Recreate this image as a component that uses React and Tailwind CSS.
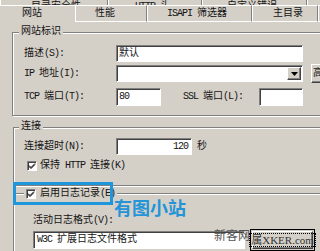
import React from "react";

const raised =
  "bg-[#d4d0c8] border border-t-white border-l-white border-r-[#404040] border-b-[#404040] shadow-[inset_-1px_-1px_0_#808080]";
const sunken =
  "bg-white border border-t-[#808080] border-l-[#808080] border-r-white border-b-white shadow-[inset_1px_1px_0_#404040]";
const etched =
  "border border-[#808080] shadow-[1px_1px_0_#fff,inset_1px_1px_0_#fff]";

function T({ children }) {
  const parts = String(children).split(/([\x20-\x7e]+)/);
  return (
    <>
      {parts.map((p, i) =>
        /^[\x20-\x7e]+$/.test(p) ? (
          <span key={i} className="tracking-[-1px] whitespace-pre">
            {p}
          </span>
        ) : (
          <span key={i}>{p}</span>
        )
      )}
    </>
  );
}

function Check() {
  return (
    <span className={`${sunken} w-[10px] h-[10px] shrink-0 flex items-center justify-center`}>
      <svg width="8" height="8" viewBox="0 0 8 8">
        <path d="M1 3.5 L3 5.5 L7 1.5 M1 4.5 L3 6.5 L7 2.5" stroke="#000" strokeWidth="1" fill="none" />
      </svg>
    </span>
  );
}

function BackTab({ w, label }) {
  return (
    <div className={`${w} h-[5px] shrink-0 border-l border-l-white border-r border-r-[#808080] flex items-end overflow-hidden`}>
      <span className="leading-none whitespace-nowrap mb-[-7px]">
        <T>{label}</T>
      </span>
    </div>
  );
}

function FrontTab({ w, label, selected }) {
  return (
    <div
      className={`${w} shrink-0 flex items-center whitespace-nowrap h-[17px] ${
        selected
          ? "border-t border-t-white pb-[1px]"
          : "border-t border-t-white border-l border-l-white border-r border-r-[#808080] border-b border-b-white"
      }`}
    >
      <T>{label}</T>
    </div>
  );
}

export default function App() {
  return (
    <div className="relative w-[320px] h-[251px] overflow-hidden bg-[#d4d0c8] text-[#141414] text-[10px] leading-none font-['Liberation_Mono','Noto_Sans_CJK_SC',monospace]">
      {/* back tab row */}
      <div className="flex h-[5px]">
        <BackTab w="w-[108px] pl-[30px]" label="目录安全性" />
        <BackTab w="w-[94px] pl-[26px]" label="HTTP 头" />
        <BackTab w="w-[105px] pl-[24px]" label="自定义错误" />
        <BackTab w="w-[60px] pl-[20px]" label="服务器扩展" />
      </div>
      {/* front tab row */}
      <div className="flex">
        <FrontTab w="w-[75px] pl-[22px]" label="网站" selected />
        <FrontTab w="w-[72px] pl-[19px]" label="性能" />
        <FrontTab w="w-[105px] pl-[19px]" label="ISAPI 筛选器" />
        <FrontTab w="w-[66px] pl-[20px]" label="主目录" />
        <FrontTab w="w-[40px] pl-[10px]" label="文档" />
      </div>

      {/* group 1 */}
      <div className={`relative ${etched} ml-[12px] mt-[10px] w-[380px] h-[84px] pl-[11px] pt-[12px]`}>
        <span className="absolute -top-[6px] left-[6px] px-[2px] bg-[#d4d0c8] leading-[10px]">网站标识</span>
        <div className="flex items-center h-[17px]">
          <span className="w-[92px] shrink-0">
            <T>描述(S):</T>
          </span>
          <div className={`${sunken} w-[187px] h-[17px] shrink-0 flex items-center pl-[2px]`}>默认</div>
        </div>
        <div className="flex items-center h-[17px] mt-[3px]">
          <span className="w-[92px] shrink-0">
            <T>IP 地址(I):</T>
          </span>
          <div className={`${sunken} w-[187px] h-[17px] shrink-0 flex items-center justify-end pr-[1px]`}>
            <div className={`${raised} w-[14px] h-[13px] flex items-center justify-center`}>
              <svg width="7" height="4" viewBox="0 0 7 4">
                <path d="M0 0 H7 L3.5 4 Z" fill="#000" />
              </svg>
            </div>
          </div>
          <div className={`${raised} ml-[8px] w-[60px] h-[19px] shrink-0 flex items-center pl-[1px] whitespace-nowrap`}>
            <T>高级(D)...</T>
          </div>
        </div>
        <div className="flex items-center h-[18px] mt-[6px]">
          <span className="w-[92px] shrink-0">
            <T>TCP 端口(T):</T>
          </span>
          <div className={`${sunken} w-[45px] h-[18px] shrink-0 flex items-center pl-[2px]`}>
            <T>80</T>
          </div>
          <span className="ml-[22px] w-[76px] shrink-0">
            <T>SSL 端口(L):</T>
          </span>
          <div className={`${sunken} w-[44px] h-[18px] shrink-0`} />
        </div>
      </div>

      {/* group 2 */}
      <div className={`relative ${etched} ml-[13px] mt-[11px] w-[380px] h-[59px] pl-[10px] pt-[10px]`}>
        <span className="absolute -top-[6px] left-[5px] px-[2px] bg-[#d4d0c8] leading-[10px]">连接</span>
        <div className="flex items-center h-[17px]">
          <span className="w-[92px] shrink-0">
            <T>连接超时(N):</T>
          </span>
          <div className={`${sunken} w-[76px] h-[17px] shrink-0 flex items-center justify-end pr-[3px]`}>
            <T>120</T>
          </div>
          <span className="ml-[5px]">秒</span>
        </div>
        <div className="flex items-center h-[16px] mt-[3px] pl-[3px] gap-[3px]">
          <Check />
          <span>
            <T>保持 HTTP 连接(K)</T>
          </span>
        </div>
      </div>

      {/* group 3 */}
      <div className={`relative ${etched} ml-[13px] mt-[7px] w-[380px] h-[80px] pl-[19px] pt-[21px]`}>
        <div className="absolute -top-[5px] left-[10px] pl-[2px] pr-[2px] bg-[#d4d0c8] flex items-center gap-[4px]">
          <Check />
          <span className="leading-[10px]">
            <T>启用日志记录(E)</T>
          </span>
        </div>
        <div className="h-[12px] flex items-center">
          <T>活动日志格式(V):</T>
        </div>
        <div className="flex items-center mt-[2px]">
          <div className={`${sunken} w-[212px] h-[18px] shrink-0 flex items-center pl-[3px]`}>
            <T>W3C 扩展日志文件格式</T>
          </div>
          <div className="ml-[5px] w-[65px] h-[22px] shrink-0 border border-black p-[1px]">
            <div className={`${raised} w-full h-full flex items-center justify-center`}>
              <div className="border border-dotted border-[#000] px-[1px] h-[14px] flex items-center whitespace-nowrap font-['Liberation_Serif','Noto_Sans_CJK_SC',serif] text-[11px] text-[#333]">
                属XKER.com
              </div>
            </div>
          </div>
        </div>
      </div>

      {/* overlays */}
      <div className="absolute left-[13px] top-[182px] w-[100px] h-[23px] border-[3px] border-[#1e96dc]" />
      <div className="absolute left-[114px] top-[196px] text-[18px] leading-[22px] font-bold text-[#2394d8] font-['Noto_Sans_CJK_SC',sans-serif]">
        有图小站
      </div>
      <div className="absolute left-[214px] top-[228px] text-[12px] leading-[13px] text-[#555] font-['Noto_Sans_CJK_SC',serif]">
        新客网
      </div>
    </div>
  );
}
